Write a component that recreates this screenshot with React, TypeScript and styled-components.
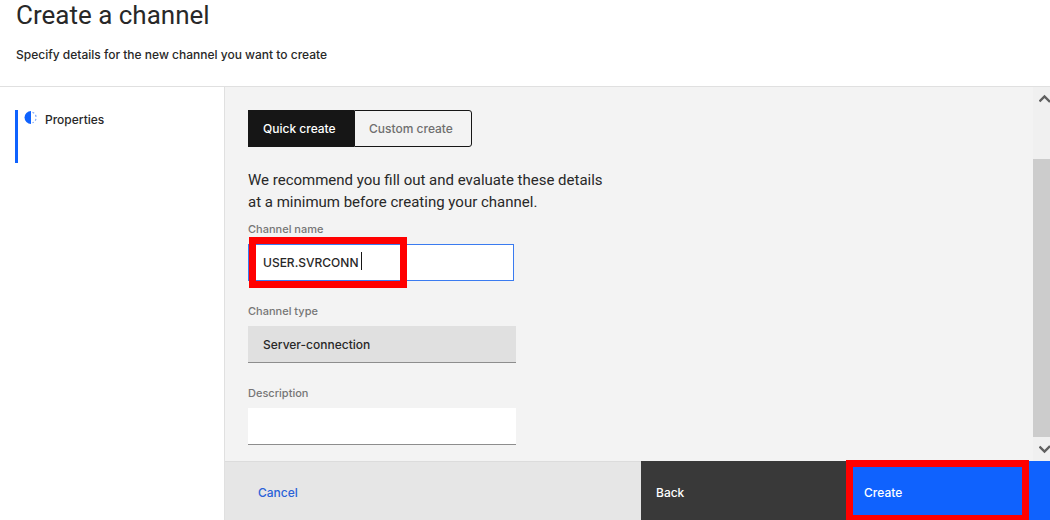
import React, { useState } from "react";
import styled, { createGlobalStyle, css } from "styled-components";

const GlobalStyle = createGlobalStyle`
  *, *::before, *::after { box-sizing: border-box; }
  body {
    margin: 0;
    background: #ffffff;
    color: #282828;
    font-family: Inter, "Liberation Sans", sans-serif;
    font-size: 12px;
    font-weight: 500;
    line-height: 16px;
  }
  button, input { font: inherit; color: inherit; }
`;

const Page = styled.div`
  display: flex;
  flex-direction: column;
  min-height: 100vh;
`;

const Header = styled.header`
  padding: 0 16px 23px;
  border-bottom: 1px solid #e0e0e0;
`;

const Title = styled.h1`
  margin: 0 0 16px;
  font-family: Roboto, sans-serif;
  font-size: 26px;
  font-weight: 400;
  line-height: 31px;
`;

const Subtitle = styled.p`
  margin: 0;
`;

const Body = styled.div`
  display: flex;
  flex: 1;
`;

const Sidebar = styled.nav`
  flex: none;
  width: 225px;
  padding: 23px 15px;
  border-right: 1px solid #e0e0e0;
`;

const Step = styled.a`
  display: flex;
  align-items: flex-start;
  gap: 7px;
  height: 53px;
  padding-left: 6px;
  border-left: 3px solid #0f62fe;
  color: inherit;
  text-decoration: none;
`;

const StepLabel = styled.span`
  padding-top: 2px;
`;

const Main = styled.main`
  display: flex;
  flex: 1;
  flex-direction: column;
  min-width: 0;
`;

const ScrollArea = styled.div`
  display: flex;
  flex: 1;
  background: #f3f3f3;
`;

const Form = styled.form`
  flex: 1;
  padding: 23px 23px 15px;
`;

const Switcher = styled.div`
  display: flex;
  height: 37px;
`;

const SwitchButton = styled.button<{ $selected: boolean }>`
  min-width: 106px;
  padding: 0 14px;
  border: 1px solid #161616;
  background: transparent;
  color: #6f6f6f;
  text-align: left;
  &:last-child {
    min-width: 118px;
    border-radius: 0 3px 3px 0;
  }
  ${(p) =>
    p.$selected &&
    css`
      background: #161616;
      color: #ffffff;
    `}
`;

const Intro = styled.p`
  max-width: 365px;
  margin: 22px 0 8px;
  font-family: Roboto, sans-serif;
  font-size: 15px;
  font-weight: 400;
  line-height: 22px;
`;

const Field = styled.div`
  position: relative;
  display: flex;
  flex-direction: column;
  gap: 7px;
  max-width: 268px;
  & + & { margin-top: 22px; }
`;

const Label = styled.label`
  color: #767676;
  font-size: 11px;
`;

const TextInput = styled.input<{ $active?: boolean }>`
  width: 100%;
  height: 37px;
  padding: 0 15px;
  border: 0;
  border-bottom: 1px solid #8d8d8d;
  border-radius: 0;
  background: #ffffff;
  outline: none;
  ${(p) =>
    p.$active &&
    css`
      max-width: 266px;
      padding: 0 14px;
      border: 1px solid #3a7bf0;
    `}
  &:read-only { background: #e0e0e0; }
`;

const Caret = styled.span`
  position: absolute;
  top: 31px;
  left: 113px;
  width: 1px;
  height: 18px;
  background: #161616;
`;

const Highlight = styled.span`
  position: absolute;
  border: 7px solid #ff0000;
  pointer-events: none;
`;

const NameHighlight = styled(Highlight)`
  top: 16px;
  left: 1px;
  width: 158px;
  height: 51px;
`;

const CreateHighlight = styled(Highlight)`
  top: -1px;
  bottom: 0;
  left: 0;
  width: 183px;
  border-bottom-width: 5px;
`;

const Scrollbar = styled.div`
  display: flex;
  flex: none;
  flex-direction: column;
  width: 17px;
  background: #f0f0f0;
`;

const ArrowSlot = styled.div`
  display: flex;
  justify-content: flex-end;
  align-items: center;
  height: 24px;
`;

const Track = styled.div`
  display: flex;
  flex: 1;
  padding-top: 48px;
`;

const Thumb = styled.div`
  flex: 1;
  background: #cccccc;
`;

const Footer = styled.footer`
  display: grid;
  grid-template-columns: 1fr 205px 204px;
  height: 59px;
`;

const tones = {
  ghost: css`
    padding-left: 33px;
    border-top: 1px solid #dcdcdc;
    background: #e6e6e6;
    color: #2a62d8;
  `,
  secondary: css`
    background: #393939;
  `,
  primary: css`
    padding-left: 18px;
    background: #0f62fe;
  `,
};

const Action = styled.button<{ $tone: keyof typeof tones }>`
  position: relative;
  padding: 4px 15px 0;
  border: 0;
  color: #ffffff;
  text-align: left;
  ${(p) => tones[p.$tone]}
`;

function ProgressIcon() {
  return (
    <svg width="14" height="15" viewBox="0 0 14 15" aria-hidden="true">
      <path d="M7 1a6.5 6.5 0 0 0 0 13z" fill="#0f62fe" />
      <path
        d="M8.5 2.2A5.7 5.7 0 0 1 8.5 12.8"
        fill="none"
        stroke="#7aa8ff"
        strokeWidth="1.2"
        strokeDasharray="2 2"
      />
    </svg>
  );
}

function Arrow({ down = false }: { down?: boolean }) {
  return (
    <svg width="11" height="12" viewBox="0 0 11 12" aria-hidden="true">
      <path
        d={down ? "M0.5 3.5L5.5 8.5L11 3" : "M0.5 8.5L5.5 3.5L11 9"}
        fill="none"
        stroke="#606060"
        strokeWidth="2.4"
      />
    </svg>
  );
}

export default function App() {
  const [mode, setMode] = useState("quick");
  const [name, setName] = useState("USER.SVRCONN");
  const [description, setDescription] = useState("");

  return (
    <Page>
      <GlobalStyle />
      <Header>
        <Title>Create a channel</Title>
        <Subtitle>Specify details for the new channel you want to create</Subtitle>
      </Header>
      <Body>
        <Sidebar>
          <Step href="#properties" aria-current="step">
            <ProgressIcon />
            <StepLabel>Properties</StepLabel>
          </Step>
        </Sidebar>
        <Main>
          <ScrollArea>
            <Form id="properties">
              <Switcher>
                <SwitchButton type="button" $selected={mode === "quick"} onClick={() => setMode("quick")}>
                  Quick create
                </SwitchButton>
                <SwitchButton type="button" $selected={mode === "custom"} onClick={() => setMode("custom")}>
                  Custom create
                </SwitchButton>
              </Switcher>
              <Intro>
                We recommend you fill out and evaluate these details at a minimum before creating your channel.
              </Intro>
              <Field>
                <Label htmlFor="name">Channel name</Label>
                <TextInput id="name" $active value={name} onChange={(e) => setName(e.target.value)} />
                <Caret />
                <NameHighlight />
              </Field>
              <Field>
                <Label htmlFor="type">Channel type</Label>
                <TextInput id="type" readOnly value="Server-connection" />
              </Field>
              <Field>
                <Label htmlFor="description">Description</Label>
                <TextInput id="description" value={description} onChange={(e) => setDescription(e.target.value)} />
              </Field>
            </Form>
            <Scrollbar>
              <ArrowSlot>
                <Arrow />
              </ArrowSlot>
              <Track>
                <Thumb />
              </Track>
              <ArrowSlot>
                <Arrow down />
              </ArrowSlot>
            </Scrollbar>
          </ScrollArea>
          <Footer>
            <Action type="button" $tone="ghost">Cancel</Action>
            <Action type="button" $tone="secondary">Back</Action>
            <Action type="button" $tone="primary">
              Create
              <CreateHighlight />
            </Action>
          </Footer>
        </Main>
      </Body>
    </Page>
  );
}
